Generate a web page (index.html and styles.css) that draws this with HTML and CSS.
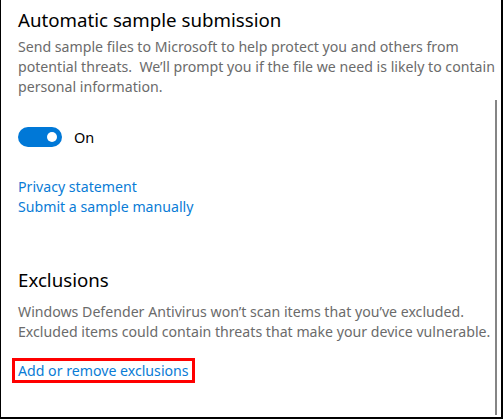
FILE: index.html
```html
<!DOCTYPE html>
<html>
<head>
<meta charset="utf-8">
<link rel="stylesheet" href="styles.css">
</head>
<body>
<div class="frame">
  <section class="section">
    <h2 class="heading">Automatic sample submission</h2>
    <p class="desc">Send sample files to Microsoft to help protect you and others from potential threats.&nbsp; We’ll prompt you if the file we need is likely to contain personal information.</p>
    <div class="toggle-row">
      <span class="toggle"><span class="knob"></span></span>
      <span class="toggle-label">On</span>
    </div>
    <div class="links">
      <a class="link">Privacy statement</a>
      <a class="link">Submit a sample manually</a>
    </div>
  </section>
  <section class="section excl">
    <h2 class="heading">Exclusions</h2>
    <p class="desc excl-desc">Windows Defender Antivirus won’t scan items that you’ve excluded. Excluded items could contain threats that make your device vulnerable.</p>
    <div class="highlight"><a class="link">Add or remove exclusions</a></div>
  </section>
  <div class="scrollbar"></div>
</div>
</body>
</html>
```
FILE: styles.css
```css
html, body {
  margin: 0;
  padding: 0;
  background: #fff;
}
.frame {
  position: relative;
  box-sizing: border-box;
  width: 503px;
  height: 419px;
  border-left: 1px solid #000;
  border-right: 2px solid #000;
  border-bottom: 2px solid #000;
  padding: 6px 0 0 17px;
  font-family: "Noto Sans", "Open Sans", sans-serif;
  display: flex;
  flex-direction: column;
}
.section {
  display: flex;
  flex-direction: column;
}
.heading {
  margin: 0;
  font-weight: normal;
  font-size: 18.7px;
  line-height: 28px;
  color: #000;
}
.desc {
  margin: 3px 0 0;
  font-size: 14.15px;
  line-height: 20px;
  color: #6b6b6b;
  width: 482px;
}
.excl-desc {
  margin-top: 8px;
}
.toggle-row {
  display: flex;
  align-items: center;
  gap: 12px;
  margin-top: 30px;
}
.toggle {
  width: 44px;
  height: 20px;
  border-radius: 10px;
  background: #0078d7;
  display: flex;
  align-items: center;
  justify-content: flex-end;
  padding-right: 5px;
  box-sizing: border-box;
}
.knob {
  width: 10px;
  height: 10px;
  border-radius: 50%;
  background: #fff;
}
.toggle-label {
  font-size: 14.5px;
  color: #000;
}
.links {
  display: flex;
  flex-direction: column;
  margin-top: 30px;
}
.link {
  font-size: 14.15px;
  line-height: 20px;
  color: #0a7cd6;
}
.excl {
  margin-top: 49px;
}
.highlight {
  align-self: flex-start;
  margin: 16px 0 0 -6px;
  border: 3px solid #ff0000;
  padding: 0 3px 0 3px;
  line-height: 18px;
}
.highlight .link {
  line-height: 18px;
}
.scrollbar {
  position: absolute;
  right: 4px;
  top: 100px;
  bottom: 2px;
  width: 2px;
  background: #858585;
}
```
